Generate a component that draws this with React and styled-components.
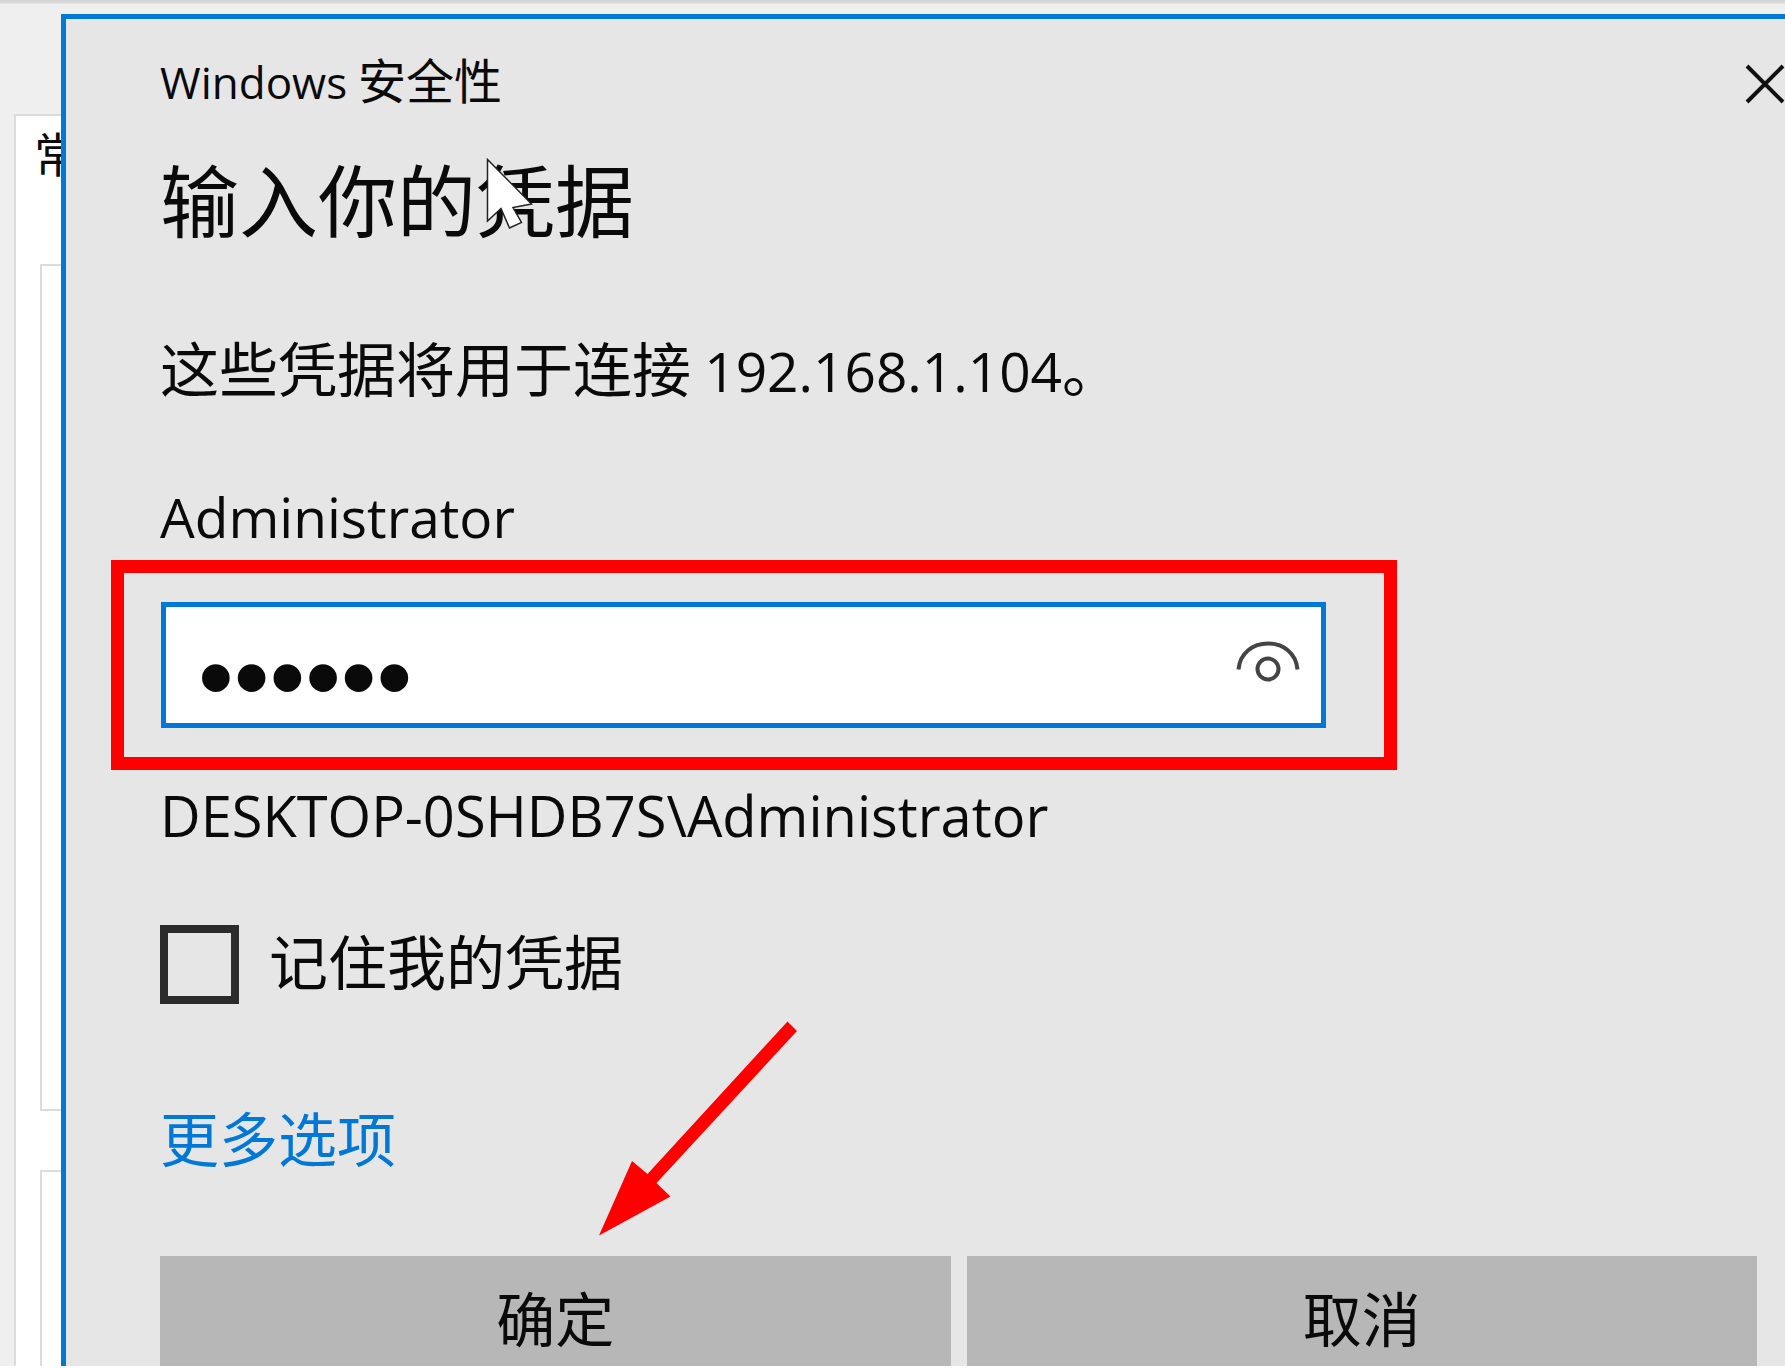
import React, { useState } from "react";
import styled, { createGlobalStyle } from "styled-components";

const Cursor = () => (
  <CursorIcon viewBox="0 0 48 72" aria-hidden="true">
    <path
      d="M1.5 1.5 L1.5 63 L15 50.5 L23.5 70 L35.5 64.5 L27 49.5 L45.5 46 Z"
      fill="#fff"
      stroke="#222"
      strokeWidth="1.5"
    />
  </CursorIcon>
);

const Arrow = () => (
  <ArrowIcon viewBox="0 0 200 216" aria-hidden="true">
    <path
      d="M1 215.5 L34 141 L49.5 154 L189.5 1.5 L199 11 L58.5 163 L72.5 176.5 Z"
      fill="#f00"
    />
  </ArrowIcon>
);

const App = () => {
  const [password, setPassword] = useState("123456");
  const [visible, setVisible] = useState(false);
  const [remember, setRemember] = useState(false);

  return (
    <>
      <GlobalStyle />
      <Page>
        <TopEdge />
        <Desktop>
          <Behind>
            <TabPage>
              <TabLabel>常</TabLabel>
              <Group size="847px" />
              <Group size="400px" />
            </TabPage>
          </Behind>
          <Dialog>
            <TitleBar>
              <Title>
                <Latin size="44px">Windows</Latin> 安全性
              </Title>
              <CloseButton type="button" aria-label="关闭">
                <svg width="40" height="40" viewBox="0 0 40 40">
                  <path d="M2 2 L38 38 M38 2 L2 38" stroke="#111" strokeWidth="4" />
                </svg>
              </CloseButton>
            </TitleBar>
            <Heading>
              输入你的凭据
              <Cursor />
            </Heading>
            <Text top="77px">
              这些凭据将用于连接 <Latin size="55px">192.168.1.104</Latin>。
            </Text>
            <UserLabel htmlFor="password">
              <Latin size="55px">Administrator</Latin>
            </UserLabel>
            <Highlight>
              <PasswordBox>
                <PasswordInput
                  id="password"
                  type={visible ? "text" : "password"}
                  value={password}
                  onChange={(e) => setPassword(e.target.value)}
                />
                <RevealButton
                  type="button"
                  aria-label="显示密码"
                  onClick={() => setVisible(!visible)}
                >
                  <svg width="64" height="48" viewBox="0 0 64 48">
                    <g fill="none" stroke="#444" strokeWidth="4">
                      <path d="M2.5 28.5 C4 12 17 2.5 32 2.5 S60 12 61.5 28.5" />
                      <circle cx="32" cy="28" r="10.5" />
                    </g>
                  </svg>
                </RevealButton>
              </PasswordBox>
            </Highlight>
            <Text top="2px">
              <Latin size="56px">DESKTOP-0SHDB7S\Administrator</Latin>
            </Text>
            <Remember>
              <Checkbox
                type="checkbox"
                checked={remember}
                onChange={(e) => setRemember(e.target.checked)}
              />
              <span>记住我的凭据</span>
            </Remember>
            <MoreLink href="#more">更多选项</MoreLink>
            <Buttons>
              <Button type="button">
                确定
                <Arrow />
              </Button>
              <Button type="button">取消</Button>
            </Buttons>
          </Dialog>
        </Desktop>
      </Page>
    </>
  );
};

export default App;

const GlobalStyle = createGlobalStyle`
  * {
    box-sizing: border-box;
  }

  body {
    margin: 0;
    background: #fff;
    font-family: "Noto Sans CJK SC", sans-serif;
    font-size: 59px;
    line-height: 80px;
    color: #0a0a0a;
  }

  button, input {
    font: inherit;
    color: inherit;
    border: none;
    padding: 0;
    background: none;
  }
`;

const Page = styled.div`
  height: calc(100vh - 2px);
  overflow: hidden;
  display: flex;
  flex-direction: column;
  background: #efefef;
`;
const TopEdge = styled.div`
  flex: 0 0 4px;
  background: linear-gradient(#d6d6d6 50%, #e6e6e6);
`;
const Desktop = styled.div`
  flex: 1;
  min-height: 0;
  display: flex;
`;

const Behind = styled.div`
  flex: 0 0 61px;
  padding: 110px 0 0 14px;
  overflow: hidden;
`;
const TabPage = styled.div`
  padding-left: 24px;
  border-top: 2px solid #dcdcdc;
  border-left: 2px solid #dcdcdc;
  background: #fff;
`;
const TabLabel = styled.div`
  height: 148px;
  margin-left: -6px;
  font-size: 47px;
  line-height: 72px;
  white-space: nowrap;
`;
const Group = styled.div`
  height: ${(props) => props.size};
  margin-bottom: 59px;
  border: 2px solid #dcdcdc;
  border-right: none;
`;

const Dialog = styled.main`
  flex: 1;
  min-width: 0;
  margin-top: 10px;
  padding: 27px 28px 0 94px;
  border-top: 5px solid #0078d7;
  border-left: 5px solid #0078d7;
  background: #e6e6e6;
`;
const Latin = styled.span`
  font-family: "Open Sans", "Noto Sans", sans-serif;
  font-size: ${(props) => props.size};
  line-height: 0;
`;

const TitleBar = styled.header`
  display: flex;
  justify-content: space-between;
  align-items: flex-start;
`;
const Title = styled.div`
  font-size: 48px;
  line-height: 64px;
`;
const CloseButton = styled.button`
  display: flex;
  align-items: center;
  height: 64px;
  margin-right: -28px;
  padding: 12px 0 0 28px;
`;

const Heading = styled.h1`
  position: relative;
  width: max-content;
  margin: 36px 0 0;
  font-size: 79px;
  line-height: 104px;
  font-weight: 400;
`;
const CursorIcon = styled.svg`
  position: absolute;
  left: 326px;
  top: 12px;
  width: 48px;
  height: 72px;
`;

const Text = styled.p`
  margin: ${(props) => props.top} 0 0;
`;
const UserLabel = styled.label`
  display: block;
  margin-top: 66px;
`;

const Highlight = styled.div`
  margin: 7px 360px 0 -49px;
  padding: 29px 58px 29px 37px;
  border: 13px solid #f00;
`;
const PasswordBox = styled.div`
  display: flex;
  align-items: center;
  height: 126px;
  border: 5px solid #0078d7;
  background: #fff;
`;
const PasswordInput = styled.input`
  flex: 1;
  min-width: 0;
  height: 116px;
  padding: 24px 0 0 32px;
  font-family: "Liberation Sans", sans-serif;
  font-size: 102px;
  outline: none;
`;
const RevealButton = styled.button`
  display: flex;
  margin-right: 21px;
`;

const Remember = styled.label`
  display: flex;
  align-items: center;
  gap: 30px;
  width: max-content;
  margin-top: 72px;

  span {
    height: 88px;
    margin: -4px 0;
  }
`;
const Checkbox = styled.input`
  appearance: none;
  width: 79px;
  height: 79px;
  margin: 0;
  border: 8px solid #2b2b2b;

  &:checked {
    background: #2b2b2b;
  }
`;

const MoreLink = styled.a`
  display: block;
  width: max-content;
  margin-top: 93px;
  color: #0078d7;
  text-decoration: none;
`;

const Buttons = styled.div`
  display: flex;
  gap: 16px;
  margin-top: 79px;
`;
const Button = styled.button`
  position: relative;
  flex: 1;
  height: 122px;
  background: #b7b7b7;
`;
const ArrowIcon = styled.svg`
  position: absolute;
  left: 438px;
  bottom: 142px;
  width: 200px;
  height: 216px;
`;
